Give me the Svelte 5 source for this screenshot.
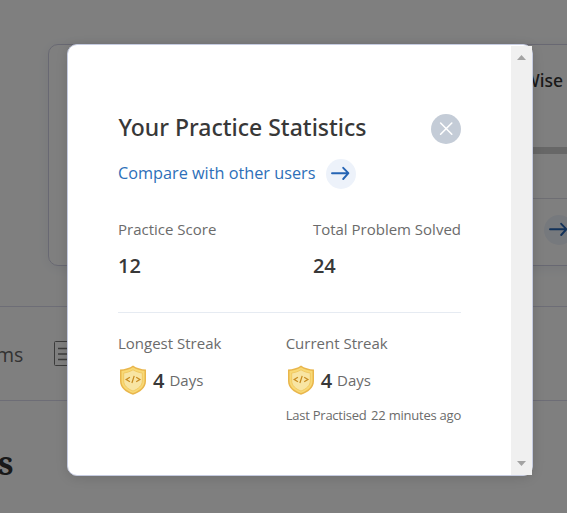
<script>
  const totals = [
    { label: 'Practice Score', value: 12 },
    { label: 'Total Problem Solved', value: 24 }
  ];
  const streaks = [
    { label: 'Longest Streak', days: 4, last: '' },
    { label: 'Current Streak', days: 4, last: '22 minutes ago' }
  ];
</script>

{#snippet arrow()}
  <svg class="arrow" width="30" height="30" viewBox="0 0 30 30" fill="none">
    <circle cx="15" cy="15" r="15" fill="#edf2fa" />
    <path d="M6 14.2H22M17.2 8.8L22.4 14.2L17.2 20" stroke="#2564b4" stroke-width="1.9" stroke-linecap="round" stroke-linejoin="round" />
  </svg>
{/snippet}

{#snippet shield()}
  <svg width="28" height="30" viewBox="0 0 28 30" fill="none">
    <path d="M14 .5C10.7 3 5.8 4.3 1 4.6V16C1 22.8 6.8 27.4 14 29.7C21.2 27.4 27 22.8 27 16V4.6C22.2 4.3 17.3 3 14 .5Z" fill="#e9b64c" />
    <path d="M14 2.2C10.8 4.5 6.5 5.6 2.5 6V16C2.5 21.8 7.5 25.9 14 28.1C20.5 25.9 25.5 21.8 25.5 16V6C21.5 5.6 17.2 4.5 14 2.2Z" fill="#f8d975" />
    <path d="M14 4.8C11 6.7 7.8 7.6 4.7 8V15.8C4.7 20.6 8.7 24 14 26C19.3 24 23.3 20.6 23.3 15.8V8C20.2 7.6 17 6.7 14 4.8Z" fill="#f8e5a3" stroke="#efc459" stroke-width=".8" />
    <path d="M10.9 12.3L7.2 14.5L10.9 16.7M17.2 12.3L20.9 14.5L17.2 16.7M15.2 10.9L12.9 18" stroke="#c88b20" stroke-width="1.25" />
  </svg>
{/snippet}

<div class="screen">
  <div class="page">
    <div class="cards">
      <div class="side"></div>
      <div class="card">
        <div class="head"><span>Topic Wise</span></div>
        <div class="bar"></div>
        <div class="foot">{@render arrow()}</div>
      </div>
    </div>
    <div class="tabs">
      <span>ms</span>
      <svg width="24" height="26" viewBox="0 0 24 26" fill="none" stroke="#777">
        <rect x=".5" y=".5" width="23" height="24" rx="1" />
        <path d="M4 7.5H20M4 13H20M4 18.5H20" stroke-width="1.6" />
      </svg>
    </div>
    <div class="heading">s</div>
  </div>

  <div class="overlay">
    <div class="modal">
      <div class="content">
        <header>
          <h1>Your Practice Statistics</h1>
          <svg width="30" height="30" viewBox="0 0 30 30">
            <circle cx="15" cy="15" r="15" fill="#c4ccd7" />
            <path d="M9.6 9L20.8 20.2M20.8 9L9.6 20.2" stroke="#fff" stroke-width="1.6" stroke-linecap="round" />
          </svg>
        </header>
        <div class="compare"><span>Compare with other users</span>{@render arrow()}</div>
        <div class="totals">
          {#each totals as t}
            <div>
              <div class="label">{t.label}</div>
              <div class="value">{t.value}</div>
            </div>
          {/each}
        </div>
        <div class="streaks">
          {#each streaks as s}
            <div>
              <div class="label">{s.label}</div>
              <div class="days">{@render shield()}<b>{s.days}</b><span>Days</span></div>
              {#if s.last}<div class="last"><span>Last Practised</span><span>{s.last}</span></div>{/if}
            </div>
          {/each}
        </div>
      </div>
      <div class="scroll">
        <svg width="9" height="5" viewBox="0 0 9 5"><path d="M0 5L4.5 0L9 5Z" fill="#a3a3a3" /></svg>
        <svg width="9" height="5" viewBox="0 0 9 5"><path d="M0 0L4.5 5L9 0Z" fill="#a3a3a3" /></svg>
      </div>
    </div>
  </div>
</div>

<style>
  :global(body) { margin: 0; }
  .screen {
    position: relative;
    width: 567px;
    height: 513px;
    overflow: hidden;
    font-family: 'Open Sans', 'Noto Sans', sans-serif;
    white-space: nowrap;
  }
  .screen * { box-sizing: border-box; }
  svg { display: block; flex: none; }
  .page { height: 513px; background: #fff; overflow: hidden; }
  .cards { display: flex; height: 306px; padding-top: 44px; }
  .side { flex: none; width: 0; height: 222px; margin-right: 48px; box-shadow: 0 0 10px #eceff4; }
  .card {
    flex: none;
    width: 560px;
    height: 222px;
    padding-left: 40px;
    border: 1px solid #d0d0e4;
    border-radius: 10px;
    box-shadow: 0 2px 14px #eceff4;
  }
  .head { height: 102px; padding-top: 23px; width: 474px; text-align: right; font-family: 'Noto Sans', sans-serif; font-size: 17.5px; line-height: 25px; font-weight: 500; color: #333; }
  .bar { height: 7px; background: #cfcfcf; }
  .foot { display: flex; height: 67px; margin-top: 44px; padding: 16px 0 0 455px; border-top: 1px solid #dcdce6; }
  .tabs {
    display: flex;
    align-items: center;
    height: 95px;
    border-top: 1px solid #dadaec;
    border-bottom: 1px solid #dadaec;
    font-size: 19.5px;
    color: #666;
  }
  .tabs span { width: 54px; margin-left: -4px; margin-right: 4px; padding-top: 1px; }
  .heading { margin: 40px 0 0 -2px; font: bold 32px/44px 'Noto Serif', 'DejaVu Serif', serif; color: #333; }
  .overlay { position: absolute; inset: 0; background: rgba(0, 0, 0, .5); }
  .modal {
    position: absolute;
    left: 67px;
    top: 44px;
    display: flex;
    width: 466px;
    height: 432px;
    border: 1px solid #c5cbe0;
    border-radius: 10px;
    background: #fff;
    box-shadow: 0 2px 12px rgba(0, 0, 0, .13);
  }
  .content { width: 443px; padding: 67px 50px 0; }
  header { display: flex; justify-content: space-between; align-items: center; height: 32px; }
  header svg { margin-top: 1px; }
  h1 { margin: 0; padding: 0 0 2px .5px; font-family: 'Noto Sans', sans-serif; font-size: 23px; line-height: 30px; font-weight: 500; color: #383838; }
  .compare { display: flex; align-items: center; gap: 11px; height: 31px; margin-top: 14px; font-size: 16.25px; color: #2d6fb9; }
  .compare span { padding-bottom: 2px; }
  .totals {
    display: flex;
    justify-content: space-between;
    height: 109px;
    margin-top: 15px;
    padding-top: 13px;
    border-bottom: 1px solid #e6ebf2;
  }
  .label { font-size: 15px; line-height: 24px; color: #6b6b6b; }
  .value { margin-top: 10px; font-size: 20px; line-height: 30px; font-weight: 600; color: #383838; }
  .streaks { display: flex; justify-content: space-between; padding-top: 18px; }
  .days { display: flex; align-items: center; height: 30px; margin-top: 10px; padding-left: 1px; font-size: 15px; color: #6b6b6b; }
  .days b { margin: 0 5px 0 6px; font-size: 20px; font-weight: 600; color: #383838; }
  .last { display: flex; gap: 4.5px; margin-top: 11px; font-size: 13px; letter-spacing: -.23px; line-height: 18px; color: #6b6b6b; }
  .scroll {
    display: flex;
    flex: none;
    flex-direction: column;
    align-items: center;
    justify-content: space-between;
    width: 21px;
    height: 429px;
    margin-top: 1px;
    padding: 9px 0;
    background: #f0f0f0;
  }
</style>
